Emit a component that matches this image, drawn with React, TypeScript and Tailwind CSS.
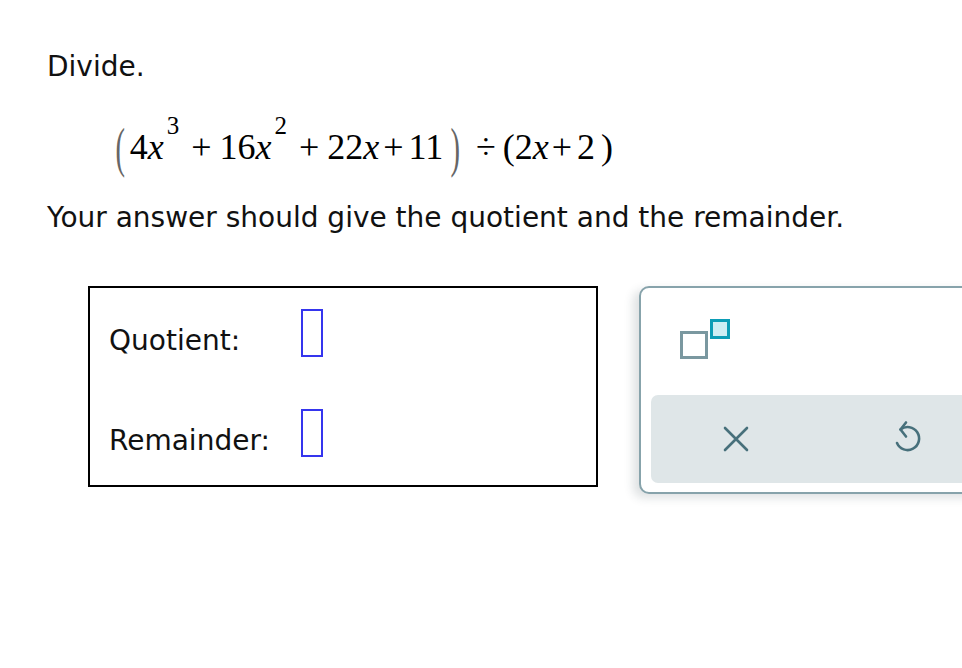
import React from "react";

const Sup = ({ children }: { children: React.ReactNode }) => (
  <span className="relative top-[-21px] ml-[3px] text-[25px]">{children}</span>
);

const X = () => <span className="italic">x</span>;

export default function App() {
  return (
    <div className="relative h-[668px] w-[962px] overflow-hidden bg-white font-['DejaVu_Sans',sans-serif] text-[28px] leading-[32px] text-[#111]">
      <div className="pl-[47px] pt-[51px]">Divide.</div>

      <div className="mt-[35px] flex h-[58px] items-center pl-[114px] font-['Liberation_Serif',serif] text-[36px] leading-[44px] text-black">
        <span className="inline-block origin-center scale-x-[0.75] scale-y-[1.45] text-[38px] text-[#666]">(</span>
        <span className="ml-[3px]">4</span>
        <X />
        <Sup>3</Sup>
        <span className="ml-[12px]">+</span>
        <span className="ml-[8px]">16</span>
        <X />
        <Sup>2</Sup>
        <span className="ml-[12px]">+</span>
        <span className="ml-[8px]">22</span>
        <X />
        <span className="ml-[4px]">+</span>
        <span className="ml-[5px]">11</span>
        <span className="ml-[6px] inline-block origin-center scale-x-[0.75] scale-y-[1.45] text-[38px] text-[#666]">)</span>
        <span className="ml-[14px]">÷</span>
        <span className="ml-[7px]">(</span>
        <span>2</span>
        <X />
        <span className="ml-[3px]">+</span>
        <span className="ml-[5px]">2</span>
        <span className="ml-[6px]">)</span>
      </div>

      <div className="mt-[26px] pl-[47px]">Your answer should give the quotient and the remainder.</div>

      <div className="mt-[52px] flex items-start">
        <div className="ml-[88px] h-[201px] w-[510px] shrink-0 border-2 border-black pl-[19px] pt-[21px]">
          <div className="flex items-end">
            <div className="w-[192px]">Quotient:</div>
            <div className="h-[48px] w-[22px] border-2 border-[#3535ee]" />
          </div>
          <div className="mt-[52px] flex items-end">
            <div className="w-[192px]">Remainder:</div>
            <div className="h-[48px] w-[22px] border-2 border-[#3535ee]" />
          </div>
        </div>

        <div className="ml-[41px] h-[208px] w-[360px] shrink-0 rounded-[10px] border-2 border-[#87a3ab] bg-white pl-[10px] pt-[31px] shadow-[-6px_4px_10px_rgba(40,60,70,0.15)]">
          <div className="ml-[29px] flex items-start gap-[2px]">
            <div className="mt-[12px] h-[28px] w-[28px] border-[3px] border-[#7a98a0]" />
            <div className="h-[20px] w-[20px] border-[3px] border-[#0c9db6] bg-[#cdeef4]" />
          </div>
          <div className="mt-[36px] flex h-[88px] items-center rounded-[7px] bg-[#dfe6e8]">
            <div className="ml-[72px] flex h-[26px] w-[26px] items-center justify-center">
              <svg width="26" height="26" viewBox="0 0 26 26" fill="none" stroke="#47707b" strokeWidth="2.6" strokeLinecap="round">
                <path d="M2 2L24 24M24 2L2 24" />
              </svg>
            </div>
            <div className="ml-[146px] mt-[-5px]">
              <svg width="28" height="36" viewBox="0 0 28 36" fill="none" stroke="#47707b" strokeWidth="2.6" strokeLinecap="round" strokeLinejoin="round">
                <path d="M11 3.5L5.5 10.5L11 17.5" />
                <path d="M5.5 10.5A11.5 11.5 0 1 1 2 24" />
              </svg>
            </div>
          </div>
        </div>
      </div>
    </div>
  );
}
